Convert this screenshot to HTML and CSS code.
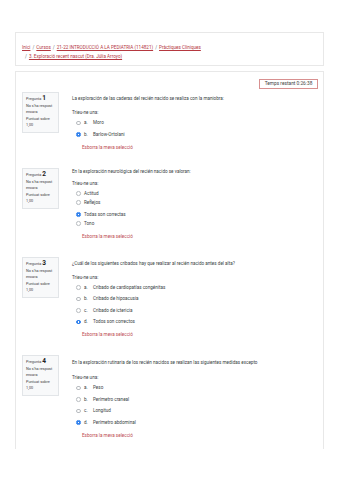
FILE: index.html
```html
<!DOCTYPE html>
<html lang="ca">
<head>
  <meta charset="UTF-8">
  <meta name="viewport" content="width=device-width, initial-scale=1.0">
  <title>3. Exploració recent nascut</title>
  <link rel="stylesheet" href="styles.css">
</head>
<body>

  <!-- Breadcrumb -->
  <div class="card header-card">
    <ol class="breadcrumb">
      <li><a href="#">Inici</a></li>
      <li><span class="sep">/</span><a href="#">Cursos</a></li>
      <li><span class="sep">/</span><a href="#">21-22 INTRODUCCIÓ A LA PEDIATRIA (114821)</a></li>
      <li><span class="sep">/</span><a href="#">Pràctiques Clíniques</a></li>
      <li class="wrap"><span class="sep">/</span><a href="#">3. Exploració recent nascut (Dra. Júlia Arroyo)</a></li>
    </ol>
  </div>

  <div class="card quiz-card">
    <div class="timer-row">
      <div class="timer">Temps restant 0:26:38</div>
    </div>

    <!-- Pregunta 1 -->
    <div class="question">
      <div class="info">
        <div class="qno">Pregunta <b>1</b></div>
        <div class="state">No s'ha respost encara</div>
        <div class="grade">Puntuat sobre 1,00</div>
      </div>
      <div class="content">
        <p class="qtext">La exploración de las caderas del recién nacido se realiza con la maniobra:</p>
        <p class="prompt">Trieu-ne una:</p>
        <div class="answers">
          <div class="opt"><span class="radio"></span><span class="letter">a.</span>Moro</div>
          <div class="opt"><span class="radio checked"></span><span class="letter">b.</span>Barlow-Ortolani</div>
        </div>
        <a class="clear" href="#">Esborra la meva selecció</a>
      </div>
    </div>

    <!-- Pregunta 2 -->
    <div class="question q2">
      <div class="info">
        <div class="qno">Pregunta <b>2</b></div>
        <div class="state">No s'ha respost encara</div>
        <div class="grade">Puntuat sobre 1,00</div>
      </div>
      <div class="content">
        <p class="qtext">En la exploración neurológica del recién nacido se valoran:</p>
        <p class="prompt">Trieu-ne una:</p>
        <div class="answers tight">
          <div class="opt"><span class="radio"></span>Actitud</div>
          <div class="opt"><span class="radio"></span>Reflejos</div>
          <div class="opt gap"><span class="radio checked"></span>Todas son correctas</div>
          <div class="opt"><span class="radio"></span>Tono</div>
        </div>
        <a class="clear" href="#">Esborra la meva selecció</a>
      </div>
    </div>

    <!-- Pregunta 3 -->
    <div class="question">
      <div class="info">
        <div class="qno">Pregunta <b>3</b></div>
        <div class="state">No s'ha respost encara</div>
        <div class="grade">Puntuat sobre 1,00</div>
      </div>
      <div class="content">
        <p class="qtext">¿Cuál de los siguientes cribados hay que realizar al recién nacido antes del alta?</p>
        <p class="prompt">Trieu-ne una:</p>
        <div class="answers">
          <div class="opt"><span class="radio"></span><span class="letter">a.</span>Cribado de cardiopatías congénitas</div>
          <div class="opt"><span class="radio"></span><span class="letter">b.</span>Cribado de hipoacusia</div>
          <div class="opt"><span class="radio"></span><span class="letter">c.</span>Cribado de ictericia</div>
          <div class="opt"><span class="radio checked"></span><span class="letter">d.</span>Todos son correctos</div>
        </div>
        <a class="clear" href="#">Esborra la meva selecció</a>
      </div>
    </div>

    <!-- Pregunta 4 -->
    <div class="question q4">
      <div class="info">
        <div class="qno">Pregunta <b>4</b></div>
        <div class="state">No s'ha respost encara</div>
        <div class="grade">Puntuat sobre 1,00</div>
      </div>
      <div class="content">
        <p class="qtext">En la exploración rutinaria de los recién nacidos se realizan las siguientes medidas excepto</p>
        <p class="prompt">Trieu-ne una:</p>
        <div class="answers">
          <div class="opt"><span class="radio"></span><span class="letter">a.</span>Peso</div>
          <div class="opt"><span class="radio"></span><span class="letter">b.</span>Perímetro craneal</div>
          <div class="opt"><span class="radio"></span><span class="letter">c.</span>Longitud</div>
          <div class="opt"><span class="radio checked"></span><span class="letter">d.</span>Perímetro abdominal</div>
        </div>
        <a class="clear" href="#">Esborra la meva selecció</a>
      </div>
    </div>
  </div>

</body>
</html>
```

FILE: styles.css
```css
body {
  margin: 0;
  background-color: #fff;
  font-family: Roboto, "Liberation Sans", Arial, sans-serif;
  color: #3a3f44;
}

p {
  margin: 0;
}

a {
  color: #b5383f;
}

.card {
  margin: 0 15px;
  border: 1px solid #e8e8e8;
}

/* Breadcrumb */
.header-card {
  margin-top: 32px;
  padding: 0 6px;
  box-sizing: border-box;
  height: 34px;
}

.breadcrumb {
  list-style: none;
  margin: 0;
  padding: 10px 0 0;
  display: flex;
  flex-wrap: wrap;
  font-size: 4.6px;
  line-height: 9px;
}

.breadcrumb li.wrap {
  flex-basis: 100%;
  padding-left: 1px;
}

.breadcrumb .sep {
  color: #6a737b;
  margin: 0 2px;
}

.breadcrumb a {
  text-decoration: underline;
}

/* Quiz */
.quiz-card {
  margin-top: 5px;
  border-bottom: none;
  padding: 7px 5px 0 5px;
  height: 378px;
  box-sizing: border-box;
}

.timer-row {
  display: flex;
  justify-content: flex-end;
}

.timer {
  border: 1px solid #d89090;
  font-size: 4.8px;
  line-height: 8px;
  padding: 0 2px;
  width: 59px;
  box-sizing: border-box;
  text-align: center;
  color: #444;
}

.question {
  display: flex;
  margin-top: 3px;
  padding-bottom: 16px;
}

.question + .question {
  margin-top: 0;
}

.info {
  width: 37px;
  height: 41px;
  margin-left: 1px;
  box-sizing: border-box;
  background-color: #f8f9fa;
  border: 1px solid #e2e5e8;
  padding: 2px 3px;
  font-size: 3.8px;
  line-height: 6px;
  color: #444;
}

.info .qno b {
  font-size: 6.5px;
  color: #222;
}

.info .state,
.info .grade {
  margin-top: 1px;
}

.content {
  margin-left: 13px;
  font-size: 4.6px;
  line-height: 8px;
}

.qtext {
  margin-top: 3px;
}

.prompt {
  margin-top: 6px;
}

.answers {
  padding-left: 4px;
  margin-top: 2px;
  display: flex;
  flex-direction: column;
  gap: 3.5px;
}

.answers.tight {
  gap: 1px;
}

.answers .gap {
  margin-top: 3px;
}

.opt {
  display: flex;
  align-items: center;
}

.radio {
  width: 2.6px;
  height: 2.6px;
  border: 0.4px solid #b8bcc0;
  border-radius: 50%;
  margin-right: 3.4px;
  background: #fff;
}

.radio.checked {
  border-color: #2f80ed;
  background: radial-gradient(circle, #fff 0 0.5px, #2f80ed 0.8px);
}

.letter {
  width: 9px;
}

.clear {
  display: block;
  margin-top: 5px;
  padding-left: 10px;
  text-decoration: none;
  color: #bd4a50;
}

.q2 .qtext {
  margin-top: 0;
}

.q2 .prompt {
  margin-top: 4px;
}

.q4 .qtext {
  margin-top: 4px;
}

.q4 .prompt {
  margin-top: 7px;
}
```
